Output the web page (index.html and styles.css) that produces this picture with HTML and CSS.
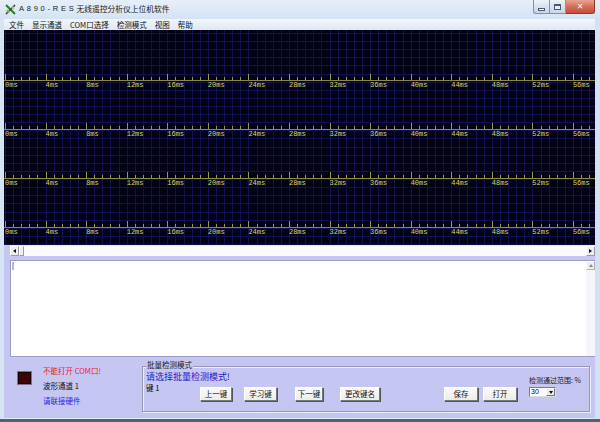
FILE: index.html
```html
<!DOCTYPE html>
<html lang="zh">
<head>
<meta charset="utf-8">
<title>A890-RES</title>
<link rel="stylesheet" href="styles.css">
</head>
<body>
<div class="window">
  <div class="titlebar">
    <svg class="appicon" width="11" height="11" viewBox="0 0 11 11">
      <path d="M1 1 L10 10" stroke="#2f7a2f" stroke-width="2"/>
      <path d="M10 1 L1 10" stroke="#3a3a3a" stroke-width="1.6"/>
      <circle cx="3" cy="7" r="1.6" fill="#7ac04a"/>
      <circle cx="8" cy="4" r="1.4" fill="#9ad06a"/>
    </svg>
    <span class="title-latin">A890-RES</span>
    <span class="title-cn">无线遥控分析仪上位机软件</span>
    <div class="controls">
      <div class="ctl ctl-min"><span class="glyph-min"></span></div>
      <div class="ctl ctl-max"><span class="glyph-max"></span></div>
      <div class="ctl ctl-close">✕</div>
    </div>
  </div>
  <div class="client">
    <div class="menubar">
      <span class="menu-item">文件</span>
      <span class="menu-item">显示通道</span>
      <span class="menu-item">COM口选择</span>
      <span class="menu-item">检测模式</span>
      <span class="menu-item">视图</span>
      <span class="menu-item">帮助</span>
    </div>
    <div class="scope">
      <div class="chan">
        <div class="axis"></div>
        <div class="labels"><span>0ms</span><span>4ms</span><span>8ms</span><span>12ms</span><span>16ms</span><span>20ms</span><span>24ms</span><span>28ms</span><span>32ms</span><span>36ms</span><span>40ms</span><span>44ms</span><span>48ms</span><span>52ms</span><span>56ms</span></div>
      </div>
      <div class="chan">
        <div class="axis"></div>
        <div class="labels"><span>0ms</span><span>4ms</span><span>8ms</span><span>12ms</span><span>16ms</span><span>20ms</span><span>24ms</span><span>28ms</span><span>32ms</span><span>36ms</span><span>40ms</span><span>44ms</span><span>48ms</span><span>52ms</span><span>56ms</span></div>
      </div>
      <div class="chan">
        <div class="axis"></div>
        <div class="labels"><span>0ms</span><span>4ms</span><span>8ms</span><span>12ms</span><span>16ms</span><span>20ms</span><span>24ms</span><span>28ms</span><span>32ms</span><span>36ms</span><span>40ms</span><span>44ms</span><span>48ms</span><span>52ms</span><span>56ms</span></div>
      </div>
      <div class="chan">
        <div class="axis"></div>
        <div class="labels"><span>0ms</span><span>4ms</span><span>8ms</span><span>12ms</span><span>16ms</span><span>20ms</span><span>24ms</span><span>28ms</span><span>32ms</span><span>36ms</span><span>40ms</span><span>44ms</span><span>48ms</span><span>52ms</span><span>56ms</span></div>
      </div>
    </div>
    <div class="hscroll">
      <div class="sb-btn"><span class="tri-left"></span></div>
      <div class="sb-thumb"></div>
      <div class="sb-track"></div>
      <div class="sb-btn"><span class="tri-right"></span></div>
    </div>
    <div class="editor">
      <div class="editor-text"><span class="caret"></span></div>
      <div class="vscroll">
        <div class="vsb-btn"><span class="tri-up"></span></div>
      </div>
    </div>
    <div class="panel">
      <div class="status">
        <div class="led"></div>
        <div class="status-text">
          <div class="err">不能打开 COM口!</div>
          <div class="chan-info">波形通道 1</div>
          <div class="hint">请联接硬件</div>
        </div>
      </div>
      <div class="groupbox">
        <span class="gb-legend">批量检测模式</span>
        <div class="gb-content">
          <div class="gb-left">
            <div class="gb-title">请选择批量检测模式!</div>
            <div class="gb-key">键 1</div>
          </div>
          <div class="gb-buttons">
            <button class="btn w-prev">上一键</button>
            <button class="btn w-learn">学习键</button>
            <button class="btn w-next">下一键</button>
            <button class="btn w-rename">更改键名</button>
            <button class="btn w-save">保存</button>
            <button class="btn w-open">打开</button>
          </div>
          <div class="range">
            <div class="range-label">检测通过范围: %</div>
            <div class="select">
              <span class="select-val">30</span>
              <span class="select-btn"><span class="tri-down"></span></span>
            </div>
          </div>
        </div>
      </div>
    </div>
  </div>
</div>
</body>
</html>
```
FILE: styles.css
```css
* { box-sizing: border-box; margin: 0; padding: 0; }
html, body { width: 600px; height: 422px; overflow: hidden; }
body {
  font-family: "Noto Sans CJK SC", "Liberation Sans", sans-serif;
  font-size: 8px;
  color: #000;
  background: #c9dbf0;
}
.window {
  width: 600px;
  height: 422px;
  display: flex;
  flex-direction: column;
  background: linear-gradient(90deg, #d6e4f4, #c9dbf0 50%, #d3e2f3);
  border-bottom: 3px solid #46667c;
}
.titlebar {
  height: 19px;
  display: flex;
  align-items: flex-start;
  padding: 0 5px 0 5px;
  background: linear-gradient(#e6eff9, #d4e3f4);
}
.appicon { margin-top: 4px; flex: none; }
.title-latin {
  margin-left: 3px;
  margin-top: 3px;
  font-family: "Liberation Sans", sans-serif;
  font-size: 7.5px;
  line-height: 12px;
  letter-spacing: 2.75px;
  color: #1a1a1a;
}
.title-cn {
  margin-top: 3px;
  font-size: 7.75px;
  line-height: 12px;
  color: #1a1a1a;
}
.controls { margin-left: auto; display: flex; }
.ctl {
  height: 14px;
  border: 1px solid #7f93ad;
  border-top: none;
  display: flex;
  align-items: center;
  justify-content: center;
}
.ctl-min {
  width: 16px;
  border-radius: 0 0 0 3px;
  border-right: none;
  background: linear-gradient(#eef3f9, #d7e2ee 50%, #c9d6e6);
}
.ctl-max {
  width: 17px;
  background: linear-gradient(#eef3f9, #d7e2ee 50%, #c9d6e6);
}
.ctl-close {
  width: 29px;
  border-left: none;
  border-radius: 0 0 3px 0;
  border-color: #8a3a30;
  background: linear-gradient(#e8a490, #d4705a 50%, #c44c36);
  color: #fff;
  font-family: "DejaVu Sans", sans-serif;
  font-size: 8px;
  font-weight: bold;
}
.glyph-min {
  width: 7px; height: 3px;
  margin-top: 5px;
  background: #fff;
  border: 1px solid #4a5a70;
}
.glyph-max {
  width: 7px; height: 6px;
  border: 1px solid #4a5a70;
  border-top-width: 2px;
  background: #e8eef6;
}
.client {
  flex: 1;
  margin: 0 5px 0 4px;
  display: flex;
  flex-direction: column;
  background: #c6c6f2;
  min-height: 0;
}
.menubar {
  height: 11px;
  display: flex;
  align-items: center;
  padding-left: 5px;
  gap: 8px;
  background: linear-gradient(#f2f6fb, #e0e8f3);
  font-size: 7.5px;
  line-height: 11px;
}
.menu-item { color: #111; }
.scope {
  height: 215px;
  padding-top: 11px;
  overflow: hidden;
  background-color: #020216;
  background-image:
    repeating-linear-gradient(90deg, #111150 0 1px, transparent 1px 8.114px),
    repeating-linear-gradient(180deg, #111150 0 1px, transparent 1px 8.114px);
  background-position: 1px 0, 0 3px;
  display: flex;
  flex-direction: column;
}
.chan {
  height: 49px;
  flex: none;
  display: flex;
  flex-direction: column;
  justify-content: flex-end;
}
.axis {
  height: 7px;
  border-bottom: 1px solid #8c8a3a;
  background-image:
    repeating-linear-gradient(90deg, #9a9848 0 1px, transparent 1px 40.57px),
    repeating-linear-gradient(90deg, #9a9848 0 1px, transparent 1px 8.114px);
  background-size: 100% 6px, 100% 3px;
  background-position: 1px 0, 1px 3px;
  background-repeat: no-repeat;
}
.labels {
  height: 9px;
  display: flex;
  white-space: nowrap;
  font-family: "Liberation Mono", monospace;
  font-size: 7px;
  line-height: 9px;
  color: #d8d66c;
}
.labels span { flex: none; width: 40.57px; padding-left: 1px; }
.hscroll {
  height: 11px;
  margin-left: 6px;
  display: flex;
  background: #fbfbfd;
  border-top: 1px solid #e8e8f4;
}
.sb-btn {
  width: 9px;
  flex: none;
  display: flex;
  align-items: center;
  justify-content: center;
  background: #eeeef2;
  border: 1px solid #fff;
  border-right-color: #9a9aa8;
  border-bottom-color: #9a9aa8;
}
.sb-thumb {
  width: 5px;
  flex: none;
  background: #f0f0f4;
  border: 1px solid #fff;
  border-right-color: #9a9aa8;
  border-bottom-color: #9a9aa8;
}
.sb-track { flex: 1; }
.tri-left { width: 0; height: 0; border: 2.5px solid transparent; border-right: 3px solid #111; border-left: none; }
.tri-right { width: 0; height: 0; border: 2.5px solid transparent; border-left: 3px solid #111; border-right: none; }
.tri-up { width: 0; height: 0; border: 2.5px solid transparent; border-bottom: 3px solid #888; border-top: none; }
.tri-down { width: 0; height: 0; border: 2.5px solid transparent; border-top: 3px solid #111; border-bottom: none; }
.editor {
  height: 97px;
  margin-top: 4px;
  margin-left: 6px;
  display: flex;
  background: #fff;
  border: 1px solid #9c9cc8;
  border-right: none;
}
.editor-text { flex: 1; padding: 1px 0 0 1px; }
.caret {
  display: block;
  width: 2px;
  height: 8px;
  background: #b8b8c8;
}
.vscroll {
  width: 9px;
  flex: none;
  background: #f6f6fa;
}
.vsb-btn {
  height: 9px;
  display: flex;
  align-items: center;
  justify-content: center;
  background: #eeeef2;
  border: 1px solid #fff;
  border-right-color: #b0b0bc;
  border-bottom-color: #b0b0bc;
}
.panel {
  flex: 1;
  display: flex;
  align-items: flex-start;
  border-bottom: 1px solid #e4ecf6;
}
.status {
  width: 138px;
  flex: none;
  display: flex;
  align-items: flex-start;
  padding-left: 14px;
}
.led {
  width: 13px;
  height: 12px;
  margin-top: 15px;
  background: #3a0606;
  border: 1px solid #1a0000;
  box-shadow: 0 0 0 1px #8a6a8a;
}
.status-text {
  margin-left: 12px;
  padding-top: 6px;
  font-size: 7.5px;
  line-height: 15px;
  white-space: nowrap;
}
.err { color: #f01818; }
.chan-info { color: #111; }
.hint { color: #2828e8; }
.groupbox {
  position: relative;
  width: 448px;
  height: 46px;
  margin-top: 9px;
  border: 1px solid #9898b8;
  box-shadow: inset 1px 1px 0 #ececfc, 1px 1px 0 #ececfc;
  padding: 5px 2px 0 3px;
}
.gb-legend {
  position: absolute;
  top: -7px;
  left: 3px;
  padding: 0 1px;
  background: #c6c6f2;
  font-size: 7.5px;
  line-height: 10px;
  color: #222;
}
.gb-content { display: flex; align-items: flex-start; }
.gb-left { width: 54px; flex: none; }
.gb-title {
  white-space: nowrap;
  font-size: 9px;
  line-height: 9px;
  color: #2222c8;
}
.gb-key {
  margin-top: 2px;
  font-size: 7.5px;
  line-height: 9px;
}
.gb-buttons {
  display: flex;
  padding-top: 15px;
}
.btn {
  height: 14px;
  flex: none;
  font-family: "Noto Sans CJK SC", sans-serif;
  font-size: 7.5px;
  line-height: 12px;
  color: #111;
  background: linear-gradient(#fbfbfb, #ececec);
  border: 1px solid #fff;
  border-right-color: #777;
  border-bottom-color: #777;
  box-shadow: 1px 1px 0 #555;
}
.w-prev { width: 32px; }
.w-learn { width: 33px; margin-left: 12px; }
.w-next { width: 28px; margin-left: 18px; }
.w-rename { width: 40px; margin-left: 17px; }
.w-save { width: 34px; margin-left: 64px; }
.w-open { width: 34px; margin-left: 5px; }
.range {
  margin-left: auto;
  padding-top: 4px;
  width: 58px;
  flex: none;
}
.range-label {
  white-space: nowrap;
  font-size: 7px;
  line-height: 9px;
  color: #222;
}
.select {
  width: 27px;
  height: 10px;
  margin-top: 2px;
  display: flex;
  background: #fff;
  border: 1px solid #7a7a8a;
  border-right-color: #ddd;
  border-bottom-color: #ddd;
}
.select-val {
  flex: 1;
  font-family: "Liberation Sans", sans-serif;
  font-size: 7px;
  line-height: 8px;
  padding-left: 1px;
}
.select-btn {
  width: 9px;
  display: flex;
  align-items: center;
  justify-content: center;
  background: #ececec;
  border: 1px solid #fff;
  border-right-color: #777;
  border-bottom-color: #777;
}
```
